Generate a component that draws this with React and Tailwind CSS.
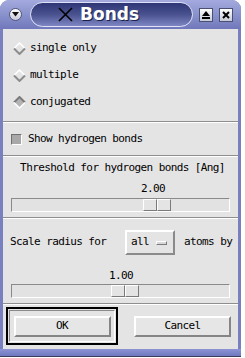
import React from 'react'

const mono = { fontFamily: '"DejaVu Sans Mono", "Liberation Mono", monospace' }

function Diamond({ on }) {
  return (
    <svg width="13" height="13" viewBox="0 0 13 13" className="shrink-0">
      {on ? (
        <>
          <polygon points="6.5,1 12,6.5 6.5,12 1,6.5" fill="#b4b4b4" />
          <polyline points="1,6.5 6.5,1 12,6.5" fill="none" stroke="#7a7a7a" strokeWidth="2" />
          <polyline points="1,6.5 6.5,12 12,6.5" fill="none" stroke="#ffffff" strokeWidth="1.5" />
        </>
      ) : (
        <>
          <polyline points="1,6.5 6.5,1 12,6.5" fill="none" stroke="#ffffff" strokeWidth="1.5" />
          <polyline points="1,6.5 6.5,12 12,6.5" fill="none" stroke="#8c8c8c" strokeWidth="2" />
        </>
      )}
    </svg>
  )
}

function Separator() {
  return <div className="h-[2px] border-t border-t-[#8e8e8e] border-b border-b-white" />
}

function Slider({ left }) {
  return (
    <div className="mx-[8px] h-[14px] border border-t-[#8a8a8a] border-l-[#8a8a8a] border-b-white border-r-white bg-[#e2e2e2] flex">
      <div style={{ width: left }} />
      <div className="w-[28px] h-full flex">
        <div className="flex-1 border border-t-white border-l-white border-b-[#7a7a7a] border-r-[#7a7a7a] bg-[#e4e4e4]" />
        <div className="flex-1 border border-t-white border-l-white border-b-[#7a7a7a] border-r-[#7a7a7a] bg-[#e4e4e4]" />
      </div>
    </div>
  )
}

function Btn({ children }) {
  return (
    <div className="w-[97px] h-[21px] flex items-center justify-center border-[2px] border-t-white border-l-white border-b-[#858585] border-r-[#858585] bg-[#e6e6e6] text-[11px] tracking-[-0.6px] text-black" style={mono}>
      {children}
    </div>
  )
}

export default function App() {
  return (
    <div className="w-[245px] h-[358px] bg-white">
      <div className="w-[241px] h-[357px] flex flex-col rounded-t-[9px] overflow-hidden bg-[#7880c0] border-b border-b-[#3a3a5a]">
        {/* title bar */}
        <div className="h-[29px] shrink-0 flex items-center bg-gradient-to-b from-[#a4aade] via-[#8a92cc] to-[#7078bc]">
          <div className="w-[30px] flex justify-center">
            <div className="w-[13px] h-[13px] rounded-full bg-gradient-to-b from-white to-[#c8c8d8] border border-[#50587c] flex items-center justify-center">
              <svg width="7" height="5" viewBox="0 0 7 5"><polygon points="0,0 7,0 3.5,4.5" fill="#111" /></svg>
            </div>
          </div>
          <div className="w-[163px] h-[25px] rounded-full border border-[#dfe2f6] bg-gradient-to-b from-[#2e3676] via-[#4a528f] to-[#7e86c2] flex items-center pl-[27px] gap-[7px]">
            <svg width="15" height="15" viewBox="0 0 15 15">
              <path d="M1 1 L14 14 M14 1 L1 14" stroke="#000" strokeWidth="1.6" />
            </svg>
            <span className="text-[17px] font-bold text-white leading-none [text-shadow:1px_1px_0_#1a1f4a]" style={{ fontFamily: '"DejaVu Sans", sans-serif' }}>Bonds</span>
          </div>
          <div className="flex gap-[6px] ml-[6px]">
            <div className="w-[14px] h-[14px] bg-gradient-to-b from-white to-[#c6c8d6] border border-[#4a4f74] flex flex-col items-center justify-center gap-[1px]">
              <svg width="8" height="5" viewBox="0 0 8 5"><polygon points="0,5 8,5 4,0" fill="#000" /></svg>
              <div className="w-[8px] h-[2px] bg-black" />
            </div>
            <div className="w-[14px] h-[14px] bg-gradient-to-b from-white to-[#c6c8d6] border border-[#4a4f74] flex items-center justify-center">
              <svg width="8" height="8" viewBox="0 0 8 8"><path d="M1 1 L7 7 M7 1 L1 7" stroke="#000" strokeWidth="2" /></svg>
            </div>
          </div>
        </div>

        {/* content */}
        <div className="mx-[3px] h-[320px] shrink-0 bg-[#e4e4e4] flex flex-col text-[11px] tracking-[-0.6px] text-black" style={mono}>
          <div className="pt-[6px] pb-[5px] pl-[10px]">
            {[['single only', false], ['multiple', false], ['conjugated', true]].map(([t, on]) => (
              <div key={t} className="h-[27px] flex items-center gap-[4px]">
                <Diamond on={on} />
                <span>{t}</span>
              </div>
            ))}
          </div>
          <Separator />
          <div className="h-[32px] flex items-center pl-[8px] gap-[6px]">
            <div className="w-[11px] h-[11px] bg-[#a8a8a8] border border-t-[#707070] border-l-[#707070] border-b-white border-r-white" />
            <span>Show hydrogen bonds</span>
          </div>
          <Separator />
          <div className="flex flex-col pt-[4px] pb-[5px]">
            <div className="h-[14px] flex items-center justify-center pl-[4px]">Threshold for hydrogen bonds [Ang]</div>
            <div className="h-[14px] mt-[7px] flex items-center pl-[138px]">2.00</div>
            <div className="mt-[2px]"><Slider left={131} /></div>
          </div>
          <Separator />
          <div className="flex flex-col pt-[11px] pb-[5px]">
            <div className="h-[25px] flex items-center pl-[7px]">
              <span className="w-[115px]">Scale radius for</span>
              <div className="w-[50px] h-[25px] border-[2px] border-t-white border-l-white border-b-[#8a8a8a] border-r-[#8a8a8a] flex items-center pl-[4px]">
                <span>all</span>
                <div className="ml-[7px] w-[11px] h-[4px] bg-[#d8d8d8] border border-t-white border-l-white border-b-[#7a7a7a] border-r-[#7a7a7a]" />
              </div>
              <span className="ml-[9px]">atoms by</span>
            </div>
            <div className="h-[14px] mt-[14px] flex items-center pl-[106px]">1.00</div>
            <div className="mt-[1px]"><Slider left={99} /></div>
          </div>
          <Separator />
          <div className="flex items-center pt-[2px]">
            <div className="ml-[3px] w-[112px] h-[38px] border-[2px] border-black p-[1px]">
              <div className="w-full h-full border border-t-[#8a8a8a] border-l-[#8a8a8a] border-b-white border-r-white flex items-center justify-center">
                <Btn>OK</Btn>
              </div>
            </div>
            <div className="ml-[16px]"><Btn>Cancel</Btn></div>
          </div>
        </div>
        <div className="flex-1 bg-gradient-to-b from-[#8c94d4] to-[#7078c0]" />
      </div>
    </div>
  )
}
